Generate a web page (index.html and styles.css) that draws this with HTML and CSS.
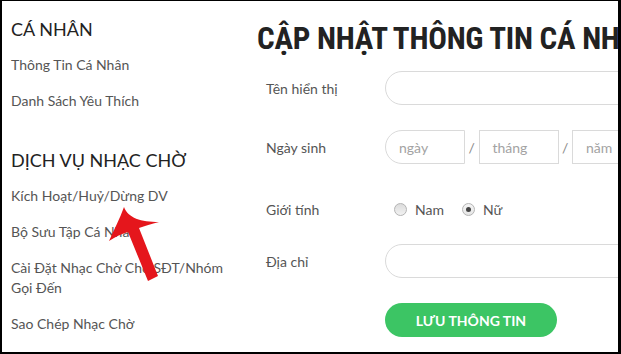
FILE: index.html
```html
<!DOCTYPE html>
<html lang="vi">
<head>
<meta charset="utf-8">
<title>Cập nhật thông tin cá nhân</title>
<link rel="stylesheet" href="styles.css">
</head>
<body>
<div class="frame">
  <aside class="sidebar">
    <h2 class="side-title">CÁ NHÂN</h2>
    <ul class="side-list">
      <li>Thông Tin Cá Nhân</li>
      <li>Danh Sách Yêu Thích</li>
    </ul>
    <h2 class="side-title second">DỊCH VỤ NHẠC CHỜ</h2>
    <ul class="side-list">
      <li>Kích Hoạt/Huỷ/Dừng DV</li>
      <li>Bộ Sưu Tập Cá Nhân</li>
      <li>Cài Đặt Nhạc Chờ Cho SĐT/Nhóm Gọi Đến</li>
      <li>Sao Chép Nhạc Chờ</li>
    </ul>
  </aside>
  <main class="main">
    <h1 class="page-title">CẬP NHẬT THÔNG TIN CÁ NHÂN</h1>
    <form class="form">
      <div class="row r1">
        <label class="label">Tên hiển thị</label>
        <div class="field wide"></div>
      </div>
      <div class="row r2">
        <label class="label">Ngày sinh</label>
        <div class="date">
          <div class="field box first"><span class="ph">ngày</span></div>
          <span class="sep">/</span>
          <div class="field box"><span class="ph">tháng</span></div>
          <span class="sep">/</span>
          <div class="field box last"><span class="ph">năm</span></div>
        </div>
      </div>
      <div class="row r3">
        <label class="label">Giới tính</label>
        <div class="radios">
          <span class="radio"></span><span class="opt">Nam</span>
          <span class="radio checked"></span><span class="opt">Nữ</span>
        </div>
      </div>
      <div class="row r4">
        <label class="label">Địa chỉ</label>
        <div class="field wide"></div>
      </div>
      <div class="row r5">
        <span class="label"></span>
        <button type="button" class="save">LƯU THÔNG TIN</button>
      </div>
    </form>
  </main>
  <svg class="arrow" width="621" height="354" viewBox="0 0 621 354">
    <path d="M124,207 C128,218 141,222 159,222 C151,224 145,226 139,228 L158,276 L148,281 L128,232 C121,234 115,237 109,241 C114,230 120,218 124,207 Z" fill="#e5161c"/>
  </svg>
</div>
</body>
</html>
```

FILE: styles.css
```css
html, body {
  margin: 0;
  padding: 0;
  background: #fff;
}

.frame {
  box-sizing: border-box;
  width: 621px;
  height: 354px;
  border-style: solid;
  border-color: #000;
  border-width: 1px 3px 2px 2px;
  display: flex;
  position: relative;
  overflow: hidden;
  font-family: Lato, "Noto Sans", sans-serif;
  color: #555;
}

.sidebar {
  width: 240px;
  flex: none;
  box-sizing: border-box;
  padding: 17px 0 0 9px;
}

.side-title {
  margin: 0;
  font-size: 18px;
  line-height: 22px;
  font-weight: 400;
  color: #222;
}

.side-title.second {
  margin-top: 38px;
}

.side-list {
  list-style: none;
  margin: 15px 0 0;
  padding: 0;
  display: flex;
  flex-direction: column;
  gap: 16px;
  font-size: 14px;
  line-height: 20px;
  padding-right: 10px;
}

.main {
  flex: 1;
  min-width: 0;
  padding: 20px 0 0 15px;
}

.page-title {
  margin: 0;
  font-family: Roboto, "DejaVu Sans", sans-serif;
  font-stretch: condensed;
  font-weight: 700;
  font-size: 31px;
  line-height: 36px;
  letter-spacing: -0.25px;
  color: #222;
  white-space: nowrap;
}

.form {
  margin-top: 14px;
  padding-left: 9px;
  display: flex;
  flex-direction: column;
}

.row {
  display: flex;
  align-items: center;
  height: 34px;
  font-size: 14px;
}

.r2 { margin-top: 25px; }
.r3 { margin-top: 28px; }
.r4 { margin-top: 18px; }
.r5 { margin-top: 25px; }

.label {
  width: 119px;
  flex: none;
  color: #555;
}

.field {
  box-sizing: border-box;
  height: 34px;
  border: 1px solid #dadada;
  background: #fff;
  display: flex;
  align-items: center;
}

.field.wide {
  width: 320px;
  flex: none;
  border-radius: 17px 0 0 17px;
}

.date {
  display: flex;
  align-items: center;
}

.box {
  width: 80px;
  flex: none;
  padding-left: 13px;
}

.box.first {
  border-radius: 17px 0 0 17px;
}

.box.last {
  width: 120px;
}

.ph {
  color: #a3a3a3;
}

.sep {
  width: 13.5px;
  text-align: center;
  color: #888;
}

.radios {
  display: flex;
  align-items: center;
  padding-left: 9px;
}

.radio {
  box-sizing: border-box;
  width: 13px;
  height: 13px;
  border-radius: 50%;
  border: 1px solid #b4b4b4;
  background: linear-gradient(#dcdcdc, #f2f2f2);
  display: flex;
  align-items: center;
  justify-content: center;
}

.radio.checked {
  background: linear-gradient(#f4f4f4, #e6e6e6);
}

.radio.checked::after {
  content: "";
  width: 5px;
  height: 5px;
  border-radius: 50%;
  background: #444;
}

.opt {
  margin-left: 8px;
  margin-right: 18px;
  color: #555;
}

.save {
  width: 172px;
  height: 34px;
  border: none;
  border-radius: 17px;
  background: #3cc564;
  color: #fff;
  font-family: Lato, sans-serif;
  font-weight: 700;
  font-size: 14px;
  padding: 0;
  cursor: pointer;
}

.arrow {
  position: absolute;
  left: -2px;
  top: -1px;
  pointer-events: none;
}
```
